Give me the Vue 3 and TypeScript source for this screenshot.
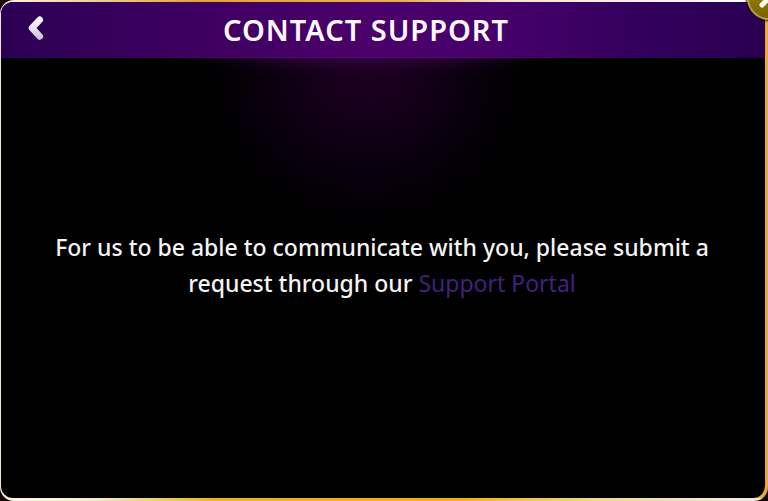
<script setup lang="ts">
const portalUrl: string = '#support-portal'
</script>

<template>
  <main class="page">
    <div class="frame">
      <section class="dialog" aria-labelledby="dialog-title">
        <header class="bar">
          <button class="back" type="button" aria-label="Back">
            <svg width="16" height="26" viewBox="0 0 16 26" aria-hidden="true">
              <defs>
                <linearGradient id="chevron" x1="0" y1="0" x2="0" y2="26" gradientUnits="userSpaceOnUse">
                  <stop offset="0" stop-color="#ffffff" />
                  <stop offset="0.5" stop-color="#eee4f2" />
                  <stop offset="1" stop-color="#c5b5d2" />
                </linearGradient>
              </defs>
              <path d="M11.8 4.8 4 13l7.8 8.4" fill="none" stroke="url(#chevron)" stroke-width="6.6" stroke-linecap="round" stroke-linejoin="round" />
            </svg>
          </button>
          <h1 id="dialog-title" class="title">CONTACT SUPPORT</h1>
        </header>
        <div class="body">
          <p class="message">
            <span>For us to be able to communicate with you, please submit a</span>
            {{ ' ' }}<span>request through our</span>
            {{ ' ' }}<a class="link" :href="portalUrl">Support Portal</a>
          </p>
        </div>
      </section>
    </div>
    <button class="close" type="button" aria-label="Close">
      <svg width="20" height="20" viewBox="0 0 20 20" aria-hidden="true">
        <path d="M3 3l14 14M17 3 3 17" fill="none" stroke="#fffdf2" stroke-width="5" stroke-linecap="round" />
      </svg>
    </button>
  </main>
</template>

<style>
body {
  margin: 0;
  background: #160805;
}
</style>

<style scoped>
.page {
  position: relative;
  display: flex;
  min-height: 100vh;
  overflow: hidden;
  font-family: "Noto Sans", "Open Sans", sans-serif;
}

.frame {
  display: flex;
  flex: 1;
  padding: 2px 3px 3px 1px;
  border-radius: 14px;
  background:
    linear-gradient(90deg, #fff4e4 0%, #f0cfa0 12%, #e6a23c 25%, #e9ad50 52%, #f6e2da 66%, #ffffff 100%) top / 100% 2px no-repeat,
    linear-gradient(90deg, #fffbe8 0%, #f8edc8 12%, #eeb024 28%, #f3ae1c 60%, #f4d88a 78%, #f5ead8 96%) bottom / 100% 3px no-repeat,
    linear-gradient(90deg, #f3e6d8 0%, #f3e6d8 50%, #eaa83a 100%);
}

.dialog {
  display: flex;
  flex: 1;
  flex-direction: column;
  overflow: hidden;
  border-radius: 12px;
  background: #000;
}

.bar {
  display: grid;
  grid-template-columns: 70px 1fr 104px;
  align-items: center;
  height: 56px;
  background:
    linear-gradient(90deg, transparent 15%, #5c0a72 48%, transparent 85%) bottom / 100% 1px no-repeat,
    linear-gradient(90deg, #2c0054 0%, #3b005e 22%, #4b006a 48%, #45006a 66%, #2f0059 88%, #2a0052 100%);
}

.back {
  display: flex;
  justify-content: center;
  width: 70px;
  padding: 0 0 4px;
  border: 0;
  background: none;
  cursor: pointer;
}

.title {
  margin: 0;
  color: #fff8ff;
  font-size: 29px;
  font-weight: 600;
  line-height: 56px;
  text-align: center;
  letter-spacing: 1px;
}

.body {
  display: flex;
  flex: 1;
  align-items: center;
  justify-content: center;
  padding: 0 42px 26px 40px;
  background:
    radial-gradient(ellipse 190px 14px at 48% 0, #30003d 0%, transparent 100%),
    radial-gradient(ellipse 160px 170px at 48% 0, #1d0021 0%, #17001b 30%, #09000e 65%, transparent 100%);
}

.message {
  margin: 0;
  color: #f4f4f4;
  font-size: 23px;
  font-weight: 500;
  line-height: 36px;
  text-align: center;
}

.link {
  color: #40227f;
  font-weight: 400;
  text-decoration: none;
}

.close {
  position: absolute;
  top: -24px;
  right: -23px;
  display: flex;
  align-items: center;
  justify-content: center;
  width: 44px;
  height: 44px;
  padding: 0;
  border: 2px solid #b59f3c;
  border-radius: 50%;
  background: linear-gradient(#a58f12, #776200);
  box-shadow: 0 0 2px 1px #16002a;
  cursor: pointer;
}
</style>
